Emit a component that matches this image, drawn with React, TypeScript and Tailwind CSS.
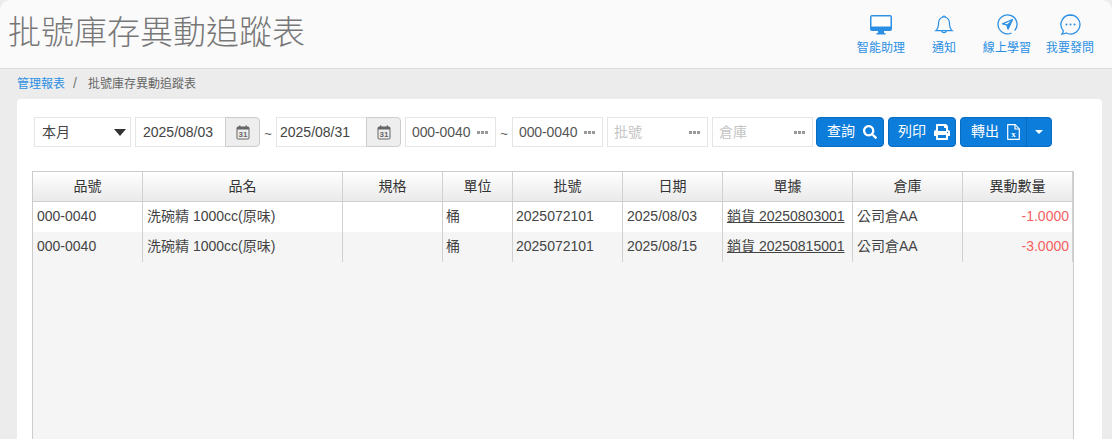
import React from "react";
import { FaSearch, FaPrint } from "react-icons/fa";

const font = { fontFamily: '"Liberation Sans", "Noto Sans CJK TC", sans-serif' };

function Monitor() {
  return (
    <svg width="22" height="20" viewBox="0 0 22 20">
      <path d="M2 0h18a2 2 0 0 1 2 2v12a2 2 0 0 1-2 2H2a2 2 0 0 1-2-2V2a2 2 0 0 1 2-2z" fill="#2b8fe3" />
      <rect x="1.5" y="1.5" width="19" height="10" fill="#fff" />
      <rect x="8" y="16" width="6" height="2" fill="#2b8fe3" />
      <rect x="6.5" y="18" width="9" height="1.5" fill="#2b8fe3" />
    </svg>
  );
}
function Bell() {
  return (
    <svg width="20" height="21" viewBox="0 0 20 21" fill="none" stroke="#2b8fe3" strokeWidth="1.2">
      <path d="M10 3a5.4 5.4 0 0 0-5.4 5.4c0 4.400-.6 6.200-2.800 8.200h16.400c-2.200-2-2.800-3.800-2.800-8.200A5.400 5.400 0 0 0 10 3z" />
      <path d="M8.300 3.200a1.800 1.800 0 0 1 3.400 0" />
      <path d="M7.600 16.800a2.500 2.500 0 0 0 4.800 0" />
    </svg>
  );
}
function Send() {
  return (
    <svg width="21" height="21" viewBox="0 0 21 21" fill="none" stroke="#2b8fe3">
      <path d="M14.500 19a9.500 9.500 0 1 1 3.200-2.400" strokeWidth="1.300" />
      <path d="M15.500 5.500 5.500 9.800l4.300 1 1.200 4.400z" strokeWidth="1.300" strokeLinejoin="round" />
      <path d="M15.500 5.500 9.800 10.800l1.200 4.400z" fill="#2b8fe3" stroke="none" />
    </svg>
  );
}
function Chat() {
  return (
    <svg width="21" height="21" viewBox="0 0 21 21" fill="none">
      <path d="M10.500 1a9.500 9.500 0 1 1-4.300 18c-1.200.7-2.900 1-4.200 1 .8-.9 1.300-2.100 1.300-3.300A9.500 9.500 0 0 1 10.500 1z" stroke="#2b8fe3" strokeWidth="1.300" />
      <circle cx="6.500" cy="10.500" r="1" fill="#2b8fe3" />
      <circle cx="10.500" cy="10.500" r="1" fill="#2b8fe3" />
      <circle cx="14.500" cy="10.500" r="1" fill="#2b8fe3" />
    </svg>
  );
}
function Calendar() {
  return (
    <svg width="14" height="15" viewBox="0 0 14 15" fill="none">
      <rect x="1" y="2" width="12" height="12" rx="1" stroke="#666" strokeWidth="1" />
      <rect x="1" y="2" width="12" height="2.500" fill="#666" />
      <rect x="3" y="0.500" width="1.500" height="3" fill="#666" />
      <rect x="9.500" y="0.500" width="1.500" height="3" fill="#666" />
      <text x="7" y="12.400" textAnchor="middle" fontSize="8" fontWeight="700" fill="#666" fontFamily="Liberation Sans">31</text>
    </svg>
  );
}
function ExcelFile() {
  return (
    <svg width="13" height="16" viewBox="0 0 13 16" fill="none">
      <path d="M.7.700h7.500l4.100 4.100v10.500H.7z" stroke="#fff" strokeWidth="1.200" strokeLinejoin="round" />
      <path d="M8 .7v4.300h4.300" stroke="#fff" strokeWidth="1.200" />
      <text x="6.500" y="12.500" textAnchor="middle" fontSize="9" fontWeight="700" fill="#fff" fontFamily="Liberation Serif">x</text>
    </svg>
  );
}
function Dots() {
  return (
    <span className="flex gap-px">
      <span className="w-[3px] h-[3px] bg-[#999]" />
      <span className="w-[3px] h-[3px] bg-[#999]" />
      <span className="w-[3px] h-[3px] bg-[#999]" />
    </span>
  );
}

function HeadItem({ icon, label, w }: { icon: React.ReactNode; label: string; w: string }) {
  return (
    <div className={`flex flex-col items-center ${w}`}>
      <div className="h-[21px] flex items-center justify-center">{icon}</div>
      <div className="text-[12px] leading-[14px] mt-[6px] text-[#2b8fe3] tracking-[0.1px]">{label}</div>
    </div>
  );
}

function DateField({ value, pad }: { value: string; pad: string }) {
  return (
    <div className="flex h-[30px]">
      <div className={`w-[90px] border border-[#e5e5e5] border-r-0 bg-white ${pad} text-[14px] leading-[28px] text-[#444]`}>{value}</div>
      <div className="w-[35px] border border-[#ccc] rounded-r-[4px] bg-[#eeeeee] flex items-center justify-center">
        <Calendar />
      </div>
    </div>
  );
}

function PickField({ value, w, placeholder }: { value: string; w: string; placeholder?: boolean }) {
  return (
    <div className={`${w} h-[30px] border border-[#e5e5e5] bg-white pl-[6px] pr-[7px] flex items-center justify-between`}>
      <span className={`text-[14px] ${placeholder ? "text-[#c4c4c4]" : "text-[#555] tracking-[-0.1px]"}`}>{value}</span>
      <Dots />
    </div>
  );
}

function Btn({ label, icon, w }: { label: string; icon: React.ReactNode; w: string }) {
  return (
    <div className={`${w} h-[30px] rounded-[4px] bg-[#0d7ddb] border border-[#0a6cc0] text-white flex items-center justify-center gap-[8px] text-[14px] pl-[4px]`}>
      <span className="pb-[2px]">{label}</span>
      {icon}
    </div>
  );
}

const cols = [110, 200, 100, 70, 110, 100, 130, 110, 110];
const heads = ["品號", "品名", "規格", "單位", "批號", "日期", "單據", "倉庫", "異動數量"];
const rows = [
  ["000-0040", "洗碗精 1000cc(原味)", "", "桶", "2025072101", "2025/08/03", "銷貨 20250803001", "公司倉AA", "-1.0000"],
  ["000-0040", "洗碗精 1000cc(原味)", "", "桶", "2025072101", "2025/08/15", "銷貨 20250815001", "公司倉AA", "-3.0000"],
];

export default function App() {
  return (
    <div style={font} className="w-[1112px] h-[439px] overflow-hidden bg-[#ececec] flex flex-col">
      <header className="h-[69px] shrink-0 bg-[#fafafa] border-b border-[#dcdcdc] rounded-t-[10px] flex items-start justify-between pl-[8px] pr-[11px]">
        <h1 className="text-[33px] leading-[44px] mt-[11px] font-extralight text-[#777]">批號庫存異動追蹤表</h1>
        <div className="flex mt-[14px]">
          <HeadItem icon={<Monitor />} label="智能助理" w="w-[64px]" />
          <HeadItem icon={<Bell />} label="通知" w="w-[62px]" />
          <HeadItem icon={<Send />} label="線上學習" w="w-[64px]" />
          <HeadItem icon={<Chat />} label="我要發問" w="w-[62px]" />
        </div>
      </header>
      <nav className="h-[30px] shrink-0 pl-[17px] flex items-center text-[12px] pb-[1px]">
        <span className="text-[#2b8fe3]">管理報表</span>
        <span className="ml-[8px] mr-[11px] text-[14px] text-[#777]">/</span>
        <span className="text-[#666]">批號庫存異動追蹤表</span>
      </nav>
      <main className="flex-1 ml-[17px] mr-[10px] bg-white rounded-t-[4px] pt-[18px] pl-[17px] pr-[25px] flex flex-col min-h-0">
        <div className="flex items-center h-[30px]">
          <div className="w-[97px] h-[30px] border border-[#e5e5e5] bg-white pl-[7px] pr-[4px] flex items-center justify-between text-[14px] text-[#444] mr-[4px]">
            <span>本月</span>
            <svg width="12" height="7" viewBox="0 0 12 7"><path d="M0 0h12L6 7z" fill="#333" /></svg>
          </div>
          <DateField value="2025/08/03" pad="pl-[7px]" />
          <span className="w-[16px] text-center text-[13px] text-[#555] pt-[3px]">~</span>
          <DateField value="2025/08/31" pad="pl-[3px]" />
          <div className="w-[4px]" />
          <PickField value="000-0040" w="w-[91px]" />
          <span className="w-[16px] text-center text-[13px] text-[#555] pt-[3px]">~</span>
          <PickField value="000-0040" w="w-[91px]" />
          <div className="w-[4px]" />
          <PickField value="批號" w="w-[101px]" placeholder />
          <div className="w-[4px]" />
          <PickField value="倉庫" w="w-[101px]" placeholder />
          <div className="w-[3px]" />
          <Btn label="查詢" icon={<FaSearch size={14} />} w="w-[68px]" />
          <div className="w-[4px]" />
          <Btn label="列印" icon={<FaPrint size={16} />} w="w-[68px]" />
          <div className="w-[4px]" />
          <div className="flex h-[30px] w-[92px] rounded-[4px] bg-[#0d7ddb] border border-[#0a6cc0] text-white text-[14px]">
            <div className="w-[66px] flex items-center justify-center gap-[8px] border-r border-[#0a6cc0] pl-[4px]">
              <span className="pb-[2px]">轉出</span>
              <ExcelFile />
            </div>
            <div className="flex-1 flex items-center justify-center">
              <svg width="8" height="4" viewBox="0 0 8 4"><path d="M0 0h8L4 4z" fill="#fff" /></svg>
            </div>
          </div>
        </div>
        <div className="mt-[24px] ml-[-2px] w-[1042px] flex-1 border border-b-0 border-[#ccc] bg-[#f5f5f5]">
          <table className="table-fixed border-separate border-spacing-0 w-[1040px] text-[14px]">
            <colgroup>
              {cols.map((c, i) => (
                <col key={i} style={{ width: c }} />
              ))}
            </colgroup>
            <thead>
              <tr className="h-[30px] bg-gradient-to-b from-[#ffffff] to-[#e9e9e9]">
                {heads.map((h) => (
                  <th key={h} className="font-normal text-[#333] text-center border-r border-b border-[#d0d0d0] p-0">
                    {h}
                  </th>
                ))}
              </tr>
            </thead>
            <tbody>
              {rows.map((r, ri) => (
                <tr key={ri} className={`h-[30px] ${ri === 0 ? "bg-white" : "bg-[#f5f5f5]"}`}>
                  {r.map((c, ci) => (
                    <td
                      key={ci}
                      className={`p-0 pb-[2px] border-r border-[#d0d0d0] whitespace-nowrap ${ci === 8 ? "text-right pr-[3px] text-[#f55f5f]" : "text-left text-[#444]"} ${ci === 6 ? "pl-[4px] text-[#222] underline" : ci === 3 || ci === 4 ? "pl-[3px]" : ci === 8 ? "" : "pl-[4px]"}`}
                    >
                      {c}
                    </td>
                  ))}
                </tr>
              ))}
            </tbody>
          </table>
        </div>
      </main>
    </div>
  );
}
